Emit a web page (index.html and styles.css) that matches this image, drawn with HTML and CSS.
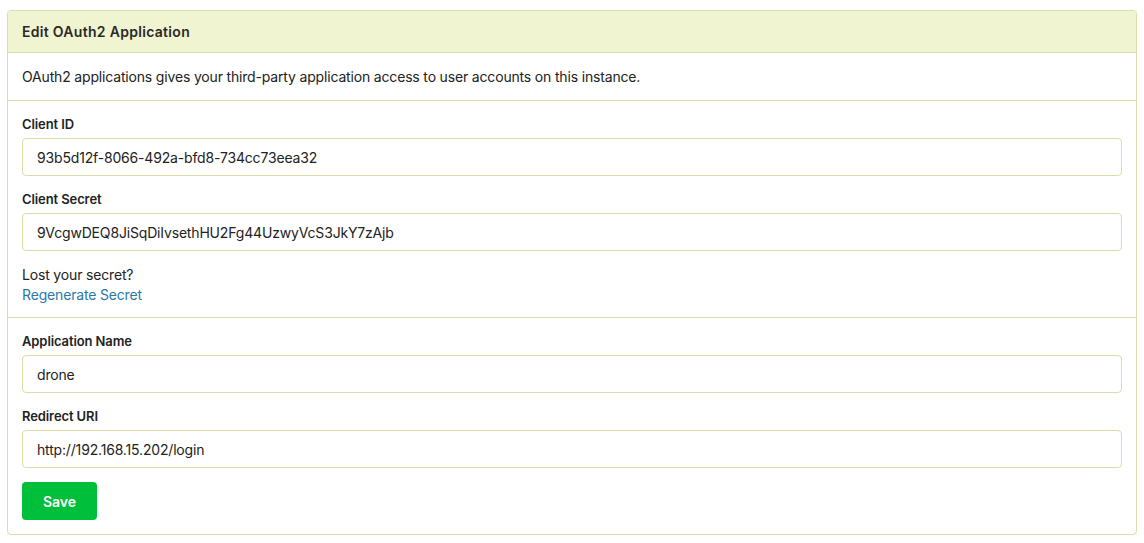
FILE: index.html
```html
<!DOCTYPE html>
<html lang="en">
<head>
<meta charset="utf-8">
<title>Edit OAuth2 Application</title>
<link rel="stylesheet" href="styles.css">
</head>
<body>
<div class="card">
  <h4 class="card-header">Edit OAuth2 Application</h4>
  <div class="card-section intro">
    <p class="desc">OAuth2 applications gives your third-party application access to user accounts on this instance.</p>
  </div>
  <div class="card-section secrets">
    <div class="field">
      <label class="field-label">Client ID</label>
      <input class="field-input" type="text" value="93b5d12f-8066-492a-bfd8-734cc73eea32" readonly>
    </div>
    <div class="field">
      <label class="field-label">Client Secret</label>
      <input class="field-input" type="text" value="9VcgwDEQ8JiSqDiIvsethHU2Fg44UzwyVcS3JkY7zAjb" readonly>
    </div>
    <div class="lost">
      <div>Lost your secret?</div>
      <a class="link" href="#">Regenerate Secret</a>
    </div>
  </div>
  <div class="card-section">
    <div class="field">
      <label class="field-label">Application Name</label>
      <input class="field-input" type="text" value="drone">
    </div>
    <div class="field">
      <label class="field-label">Redirect URI</label>
      <input class="field-input" type="text" value="http://192.168.15.202/login">
    </div>
    <button class="btn-save" type="button">Save</button>
  </div>
</div>
</body>
</html>
```
FILE: styles.css
```css
* { box-sizing: border-box; }
html, body { margin: 0; padding: 0; background: #fff; }
body {
  padding: 10px 8px 8px 7px;
  font-family: Inter, "Liberation Sans", Arial, sans-serif;
  font-size: 14px;
  line-height: 20px;
  letter-spacing: -0.17px;
  color: #222;
}
.card {
  width: 1130px;
  border: 1px solid #dcdcaa;
  border-radius: 4px;
  background: #fff;
}
.card-header {
  margin: 0;
  padding: 11px 14px 10px;
  font-size: 14px;
  line-height: 20px;
  font-weight: 600;
  letter-spacing: 0.3px;
  color: #2a2a2a;
  background: #f0f4d0;
  border-bottom: 1px solid #dcdcaa;
  border-radius: 3px 3px 0 0;
}
.card-section {
  padding: 14px 14px 14px;
  border-bottom: 1px solid #dcdcaa;
}
.card-section:last-child { border-bottom: none; }
.card-section.intro { padding-bottom: 13px; }
.card-section.secrets { padding-bottom: 12px; }
.desc { margin: 0; }
.field { display: flex; flex-direction: column; margin-bottom: 14px; }
.field-label {
  font-size: 13px;
  line-height: 19px;
  font-weight: 600;
  letter-spacing: -0.1px;
  color: #222;
  margin-bottom: 4px;
}
.field-input {
  width: 100%;
  height: 38px;
  padding: 0 14px;
  font-family: inherit;
  font-size: 14px;
  letter-spacing: -0.17px;
  color: #222;
  border: 1px solid #dcdcaa;
  border-radius: 4px;
  background: #fff;
  outline: none;
}
.lost { line-height: 20px; }
.link { color: #2b78a8; text-decoration: none; }
.btn-save {
  width: 75px;
  height: 38px;
  border: none;
  border-radius: 4px;
  background: #00c03b;
  color: #fff;
  font-family: inherit;
  font-size: 14px;
  font-weight: 600;
  cursor: pointer;
}
```
